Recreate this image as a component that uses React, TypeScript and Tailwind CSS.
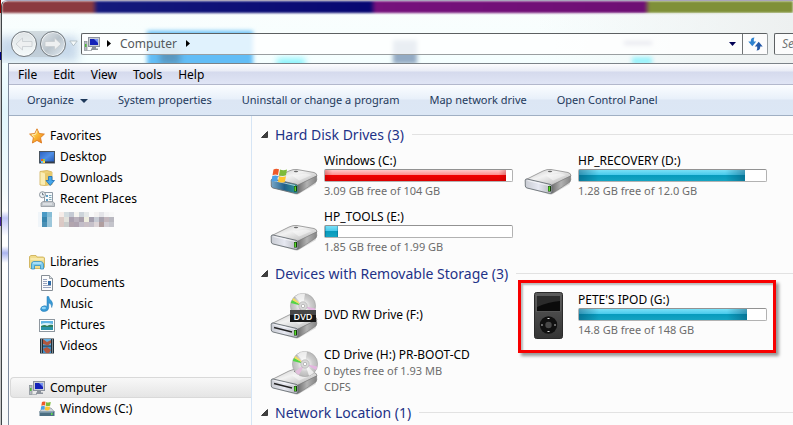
import type { ReactNode } from 'react';

type NavItem = { label: string; icon: ReactNode };

function StarIcon() {
  return (
    <svg width="16" height="16" viewBox="0 0 16 16" aria-hidden="true">
      <defs>
        <linearGradient id="star" x1="0" y1="0" x2="1" y2="1">
          <stop offset="0" stopColor="#fff3a0" />
          <stop offset="0.5" stopColor="#fbb832" />
          <stop offset="1" stopColor="#e8701a" />
        </linearGradient>
      </defs>
      <path
        d="M8 .8l2.200 4.700 5.200.6-3.900 3.600 1.100 5.300L8 12.400 3.400 15l1-5.300L.6 6.100l5.200-.6z"
        fill="url(#star)"
        stroke="#dd7b21"
        strokeLinejoin="round"
        strokeWidth="0.9"
      />
      <path d="M8 2.600L6.600 6.300l-3.600.6 2.700 2.400" fill="none" stroke="#fff6c4" strokeWidth="0.8" />
    </svg>
  );
}

function DesktopIcon() {
  return (
    <svg width="16" height="16" viewBox="0 0 16 16" aria-hidden="true">
      <defs>
        <linearGradient id="desk" x1="0" y1="0" x2="1" y2="1">
          <stop offset="0" stopColor="#2a5fc0" />
          <stop offset="0.5" stopColor="#4f8fe6" />
          <stop offset="1" stopColor="#1d4fae" />
        </linearGradient>
      </defs>
      <rect x="0.5" y="2.5" width="15" height="11.5" fill="url(#desk)" stroke="#4a5560" />
      <path d="M1 12.500h14v1.500H1z" fill="#343c47" />
      <path d="M2 10h2v2H2z" fill="#ee5a2a" />
      <path d="M4 10h2v2H4z" fill="#8fd14a" />
      <path d="M2 12h2v2H2z" fill="#5fc3f5" />
      <path d="M4 12h2v2H4z" fill="#ffd24a" />
    </svg>
  );
}

function DownloadsIcon() {
  return (
    <svg width="16" height="16" viewBox="0 0 16 16" aria-hidden="true">
      <path d="M1 1.500L8 .5l5 1.500v12.500L6 15.500l-5-.5z" fill="#edd27a" stroke="#cfae55" strokeWidth="0.8" />
      <path d="M1.500 2L6 3.500v11.500l-4.500-.5z" fill="#faedb4" />
      <path d="M6 3.500l7-1.500v12l-7 1.500z" fill="#e6c96c" />
      <path d="M9.500 6.500h3.500v4h2.500L11.200 15.500 7 10.500h2.500z" fill="#45a6ea" stroke="#1b6cb5" strokeWidth="0.8" />
    </svg>
  );
}

function RecentIcon() {
  return (
    <svg width="16" height="16" viewBox="0 0 16 16" aria-hidden="true">
      <path d="M5.500 1.500h8v10h-8z" fill="#f7fafc" stroke="#8f9aa5" />
      <path d="M7 4h2v2H7zM7 8h2v2H7z" fill="#5f9fc4" />
      <path d="M10 4.500h2.500M10 6.500h2.500M10 8.500h2.500" stroke="#7ea8b8" />
      <path d="M2 12l2-1.500h9.500L15.500 12v3.500H2z" fill="#c3c8cd" stroke="#858c94" strokeWidth="0.7" />
      <path d="M4 13h9" stroke="#f2f4f6" />
      <circle cx="3.5" cy="3.7" r="3" fill="#eef3f6" stroke="#8b949c" />
      <path d="M3.500 1.800v2h1.700" fill="none" stroke="#53616d" strokeWidth="0.8" />
    </svg>
  );
}

function LibrariesIcon() {
  return (
    <svg width="16" height="16" viewBox="0 0 16 16" aria-hidden="true">
      <path d="M.5 2.500L2 1.500h5l1 1.500h6.500l1 1v9l-1 1.500H1.500l-1-1z" fill="#f1dc8b" stroke="#c9ab4c" strokeWidth="0.8" />
      <path d="M1.500 5h13" stroke="#fff7cc" />
      <path d="M2.500 15V9.500Q3 7.500 5 7.500h6.500Q14 7.500 14.500 10v5h-3v-3.500h-6V15z" fill="#7ccbee" stroke="#348fc1" strokeWidth="0.8" />
      <path d="M4 9h8.500" stroke="#d6f2fd" />
    </svg>
  );
}

function DocumentsIcon() {
  return (
    <svg width="16" height="16" viewBox="0 0 16 16" aria-hidden="true">
      <path d="M2.500.5h8l3 3v12h-11z" fill="#fbfcfd" stroke="#868e96" />
      <path d="M10.500.5v3h3" fill="#dde3e8" stroke="#868e96" strokeWidth="0.8" />
      <path d="M4 4.500h4M4 6.500h4M4 8.500h4M4 10.500h8M4 12.500h8" stroke="#98a4be" />
      <path d="M9 6h3v4H9z" fill="#2c6aa7" />
    </svg>
  );
}

function MusicIcon() {
  return (
    <svg width="16" height="16" viewBox="0 0 16 16" aria-hidden="true">
      <path
        d="M8 .5h1.700q.3 2.600 2.800 4.500 2 2.300.2 6.500.2-3.800-3-4.700V12q-.5 3.300-4.400 3.600-3.400-.2-3.800-2.400.4-3 3.800-3.400 1.600-.1 2.700.6z"
        fill="#379ad6"
        stroke="#1f77b3"
        strokeWidth="0.5"
      />
      <ellipse cx="4.8" cy="12" rx="2.200" ry="1.200" fill="#8ed3f6" />
    </svg>
  );
}

function PicturesIcon() {
  return (
    <svg width="16" height="16" viewBox="0 0 16 16" aria-hidden="true">
      <rect x="0.5" y="2.5" width="15" height="12" fill="#fff" stroke="#8e979f" />
      <path d="M2 4h12v9H2z" fill="#5fb4e4" />
      <path d="M2 7q4-2 12 0v2H2z" fill="#d8f2f9" />
      <path d="M2 9q4-2 6 0 3-2 6-1v2H2z" fill="#2f7d5c" />
      <path d="M2 10h12v3H2z" fill="#2a93a6" />
    </svg>
  );
}

function VideosIcon() {
  return (
    <svg width="16" height="16" viewBox="0 0 16 16" aria-hidden="true">
      <path d="M1 .5h14v15H1z" fill="#22303a" />
      <path d="M4 1h8v6.500H4z" fill="#62b0e6" />
      <path d="M4 8.500h8V15H4z" fill="#3f8fcb" />
      <path d="M4 1l4 3 4-2v3L9 7.500 4 6zM4 11l4-2 4 3-2 3H7z" fill="#b0573f" />
      <path d="M2.500 1.500v13M13.500 1.500v13" stroke="#e8eef2" strokeDasharray="1 1" />
    </svg>
  );
}

function ComputerIcon() {
  return (
    <svg width="16" height="16" viewBox="0 0 16 16" aria-hidden="true">
      <rect x="4.5" y="1.5" width="11" height="9" fill="#c9ced6" stroke="#8d939e" />
      <path d="M6 3h8v6H6z" fill="#1522b8" />
      <path d="M10 3h4v4z" fill="#7692ef" />
      <path d="M8 11h4v1.500h2V14H7v-1.500h1z" fill="#8c929b" />
      <rect x="0.5" y="5.5" width="2.5" height="9" fill="#b5bbc1" stroke="#868d93" strokeWidth="0.7" />
      <path d="M1 8h1.500v3H1z" fill="#4dbb38" />
      <path d="M3 14.500h5" stroke="#b1b5ba" />
    </svg>
  );
}

function WindowsFlag() {
  return (
    <>
      <path d="M1.500 1.500Q4 0 7 1.200L6 7Q3.500 6 .5 7.200z" fill="#ee5a2a" />
      <path d="M8 1.500Q11 3 15 1.600L14 7.300Q10.500 8.600 7 7.200z" fill="#7dbb3a" />
      <path d="M.3 8Q3.500 7 6 8L5 13.500Q2.500 12.400-.5 13.600z" fill="#4aa0e6" />
      <path d="M7 8.200Q10 9.600 14 8.300L12.800 14Q9 15.200 6 13.800z" fill="#ffc52f" />
    </>
  );
}

function SmallDriveIcon() {
  return (
    <svg width="16" height="16" viewBox="0 0 16 16" aria-hidden="true">
      <path d="M.5 11l3-4H12l3.500 4z" fill="#cfd4d9" stroke="#8b959e" strokeWidth="0.7" />
      <path d="M.5 10.500h15v4.500H.5z" fill="#4c6f83" />
      <path d="M1 11h13" stroke="#a1bac8" />
      <path d="M12 12h1.500v2H12z" fill="#5be04d" />
      <g transform="translate(2 0) scale(.65)">
        <WindowsFlag />
      </g>
    </svg>
  );
}

// Mosaic that hides one of the favourites
const mosaic = [
  ['#f6ece8', '#d3dcdf', '#c5cad4', '#f5f3ef', '#cdd4da', '#e5e8e8', '#fafafa', '#f3f1f1', '#e4e4e8', '#f4f4f5', '#f8f8f8'],
  ['#dccbc6', '#e2e2dc', '#a9a0af', '#bab2bd', '#a9a0ac', '#efeedf', '#a5a0af', '#c7cbd4', '#a7a2ae', '#c3b7bd', '#b9b8c0'],
  ['#dbc9c5', '#c9cccb', '#b2a5ae', '#aea3b0', '#c2bdc8', '#cac0c6', '#c5c0c9', '#ddd5d8', '#b09e9f', '#d0ccd3', '#c4c4cb'],
];

function DriveBody({ slot, system, dy }: { slot?: boolean; system?: boolean; dy: number }) {
  return (
    <g transform={`translate(0 ${dy})`}>
      <path d="M3 36l24 7 19-11-2-5z" fill="#000" opacity="0.13" />
      <path d="M2 27.500L19 19q4-2 8-1.500l17 3q3 .8 3 3.500L28 33.500z" fill="url(#lid)" stroke="#8b8b8b" strokeWidth="0.8" />
      <path d="M27 33.500L46.500 24q.8 4-.5 6L29 41l-2 .5z" fill="url(#side)" stroke="#777" strokeWidth="0.6" />
      <path
        d="M1.200 28q.3-1.200 2-1l22.800 5.300q1.800.5 1.800 2v5.500q0 2-2 1.700L3 36q-1.500-.4-1.700-2z"
        fill={system ? 'url(#sysface)' : 'url(#face)'}
        stroke="#6a7075"
        strokeWidth="0.9"
      />
      <path d="M3.500 28.500l21.500 5" stroke="#fff" strokeWidth="0.8" opacity="0.8" />
      {slot && <path d="M4 31.500l18 4.500" stroke="#222" strokeWidth="1.300" />}
      <rect x="24" y="34" width="3" height="5.5" fill="#173d0d" />
      <rect x="24.5" y="34.5" width="1.500" height="4.500" fill="#55d829" />
      <path d="M22 23.500l14-2 6 1.500-13 5.500z" fill="#fff" opacity="0.45" />
      <ellipse cx="26" cy="19.5" rx="2.200" ry="0.800" fill="#686868" />
    </g>
  );
}

function DriveDefs() {
  return (
    <svg width="0" height="0" className="absolute" aria-hidden="true">
      <defs>
        <linearGradient id="lid" x1="0" y1="0" x2="1" y2="1">
          <stop offset="0" stopColor="#c4c4c4" />
          <stop offset="0.4" stopColor="#f2f2f2" />
          <stop offset="0.7" stopColor="#d0d0d0" />
          <stop offset="1" stopColor="#a0a0a0" />
        </linearGradient>
        <linearGradient id="side" x1="0" y1="0" x2="1" y2="0">
          <stop offset="0" stopColor="#6a6a6a" />
          <stop offset="0.5" stopColor="#b2b2b2" />
          <stop offset="1" stopColor="#848484" />
        </linearGradient>
        <linearGradient id="face" x1="0" y1="0" x2="1" y2="0">
          <stop offset="0" stopColor="#c9ccd3" />
          <stop offset="0.5" stopColor="#e6e8f1" />
          <stop offset="1" stopColor="#b4b6bd" />
        </linearGradient>
        <linearGradient id="sysface" x1="0" y1="0" x2="1" y2="0">
          <stop offset="0" stopColor="#79a8c8" />
          <stop offset="0.5" stopColor="#22608a" />
          <stop offset="1" stopColor="#2f9a97" />
        </linearGradient>
        <radialGradient id="disc">
          <stop offset="0.2" stopColor="#fafafa" />
          <stop offset="0.6" stopColor="#cfcfcf" />
          <stop offset="1" stopColor="#b9b9b9" />
        </radialGradient>
        <linearGradient id="pod" x1="0" y1="0" x2="0" y2="1">
          <stop offset="0" stopColor="#5c5c5c" />
          <stop offset="0.5" stopColor="#484848" />
          <stop offset="1" stopColor="#343434" />
        </linearGradient>
      </defs>
    </svg>
  );
}

function HardDrive({ system }: { system?: boolean }) {
  return (
    <svg width="48" height="48" viewBox="0 0 48 48" className="shrink-0" aria-hidden="true">
      <DriveBody dy={0} system={system} />
      {system && (
        <g transform="translate(2 16)">
          <WindowsFlag />
        </g>
      )}
    </svg>
  );
}

function OpticalDrive({ dvd }: { dvd?: boolean }) {
  const cx = dvd ? 33 : 35;
  const cy = dvd ? 15 : 17;
  return (
    <svg width="48" height="48" viewBox="0 0 48 48" className="shrink-0" aria-hidden="true">
      <DriveBody dy={5} slot />
      <g transform={`translate(${cx} ${cy})`}>
        <circle r="12.6" fill="url(#disc)" stroke="#a3a3a3" strokeWidth="0.6" />
        <path d="M0 0L-8-9.500A12.500 12.500 0 0 1 2-12.300z" fill="#fff" opacity="0.7" />
        <path d="M0 0L-12.300-3A12.500 12.500 0 0 1-10.800-6z" fill="#54d548" />
        <path d="M0 0L-10.800-6A12.500 12.500 0 0 1-9.500-8z" fill="#f2df5c" />
        <path d="M0 0L12.300 2.500A12.500 12.500 0 0 1 11 6z" fill="#e4b6e0" />
        <path d="M0 0L-6 11A12.500 12.500 0 0 1-10 7.500z" fill="#e2bfdc" />
        <path d="M0 0L9 8.500A12.500 12.500 0 0 1 4 11.800z" fill="#fff" opacity="0.7" />
        <circle r="4.2" fill="#d9d9d9" stroke="#aaa" strokeWidth="0.6" />
        <circle r="1.7" fill="#fff" stroke="#999" strokeWidth="0.6" />
      </g>
      {dvd && (
        <>
          <rect x="20" y="19" width="26" height="12" fill="#171717" />
          <rect x="20" y="19" width="26" height="5" fill="#474747" />
          <text x="33" y="28.500" textAnchor="middle" fontSize="9" fontWeight="600" fill="#fff" fontFamily="Open Sans, sans-serif">
            DVD
          </text>
        </>
      )}
    </svg>
  );
}

function IPod() {
  return (
    <svg width="48" height="48" viewBox="0 0 48 48" className="shrink-0" aria-hidden="true">
      <rect x="10.5" y="1.5" width="28" height="46" rx="2" fill="url(#pod)" stroke="#2b2b2b" />
      <rect x="12.5" y="4.5" width="24" height="16" fill="#0b0b0b" stroke="#6b6b6b" strokeWidth="0.7" />
      <path d="M13 5h23v5q-12 1-23 6z" fill="#2b2b2b" />
      <circle cx="24.5" cy="34" r="8.7" fill="#101010" />
      <circle cx="24.5" cy="34" r="3.2" fill="#484848" />
      <path d="M23.500 27.500h2M23.500 40.500h2" stroke="#ddd" />
      <path d="M17.500 33v2l1.700-1zM31.500 33v2l-1.700-1z" fill="#ddd" />
    </svg>
  );
}

const favorites: NavItem[] = [
  { label: 'Desktop', icon: <DesktopIcon /> },
  { label: 'Downloads', icon: <DownloadsIcon /> },
  { label: 'Recent Places', icon: <RecentIcon /> },
];

const libraries: NavItem[] = [
  { label: 'Documents', icon: <DocumentsIcon /> },
  { label: 'Music', icon: <MusicIcon /> },
  { label: 'Pictures', icon: <PicturesIcon /> },
  { label: 'Videos', icon: <VideosIcon /> },
];

const menus = ['File', 'Edit', 'View', 'Tools', 'Help'];
const commands = ['System properties', 'Uninstall or change a program', 'Map network drive', 'Open Control Panel'];

function NavRow({ label, icon, child, selected }: NavItem & { child?: boolean; selected?: boolean }) {
  return (
    <a
      href="#"
      className={`flex h-[21px] items-center gap-[5px] rounded-l-sm border border-r-0 ${child ? 'pl-7' : 'pl-[18px]'} ${
        selected ? 'border-[#d9d9d9] bg-linear-to-b from-[#f8f8f8] to-[#e5e5e5]' : 'border-transparent'
      }`}
    >
      {icon}
      <span>{label}</span>
    </a>
  );
}

function Group({ title, children }: { title: string; children?: ReactNode }) {
  return (
    <section>
      <h2 className="flex h-[27px] items-center text-[14px] text-[#1e3287]">
        <svg width="7" height="7" viewBox="0 0 7 7" className="mr-[7px] shrink-0" aria-hidden="true">
          <path d="M6.500.5v6h-6z" fill="#404040" stroke="#222" strokeWidth="0.8" />
        </svg>
        <span className="whitespace-nowrap">{title}</span>
        <span className="ml-2 h-px flex-1 bg-[#e2e2e2]" />
      </h2>
      <div className="grid grid-cols-[repeat(auto-fill,254px)] pl-[9px]">{children}</div>
    </section>
  );
}

function Usage({ label, percent, full }: { label: string; percent: number; full?: boolean }) {
  return (
    <div
      role="progressbar"
      aria-label={label}
      aria-valuenow={percent}
      className="mb-px h-[13px] w-[189px] rounded-xs border border-[#b2b2b2] border-t-[#929292] bg-white"
    >
      <div
        className={`h-full ${
          full
            ? 'bg-[linear-gradient(90deg,#a0000044,transparent_4%,transparent_96%,#a0000044),linear-gradient(#ffcaca,#ff8f8f_42%,#f00000_50%,#dc0000)]'
            : 'bg-[linear-gradient(90deg,#00385a66,transparent_12%,transparent_88%,#00385a66),linear-gradient(#79e0f7,#4bcbec_42%,#079bbd_50%,#15a4c2)]'
        }`}
        style={{ width: `${percent}%` }}
      />
    </div>
  );
}

type TileProps = {
  icon: ReactNode;
  name: string;
  details?: string[];
  percent?: number;
  full?: boolean;
  marked?: boolean;
};

function Tile({ icon, name, details = [], percent, full, marked }: TileProps) {
  return (
    <div className="relative flex h-14 items-center gap-1.5">
      {icon}
      <div className="whitespace-nowrap leading-4">
        <div>{name}</div>
        {percent !== undefined && <Usage label={name} percent={percent} full={full} />}
        {details.map((line) => (
          <div key={line} className="text-[11px] leading-4 text-[#6d6d6d]">
            {line}
          </div>
        ))}
      </div>
      {marked && (
        <div className="pointer-events-none absolute -top-[7px] -left-1.5 h-[73px] w-[258px] border-3 border-[#f80000] shadow-[3px_3px_3px_#00000066,inset_2px_2px_2px_#00000044]" />
      )}
    </div>
  );
}

function TravelButton({ back }: { back?: boolean }) {
  return (
    <button
      aria-label={back ? 'Back' : 'Forward'}
      className={`flex size-[26px] items-center justify-center rounded-full border border-[#747b80] shadow-[inset_0_0_0_1px_#ffffffaa] ${
        back ? 'bg-linear-to-b from-[#dfe4e6] to-[#f5fafb]' : 'bg-linear-to-br from-[#e4e9ec] via-[#b9c3cb] to-[#e3edf5]'
      }`}
    >
      <svg width="18" height="14" viewBox="0 0 18 14" className={back ? '' : 'rotate-180'} aria-hidden="true">
        <path d="M1 7l6.500-6v3.500H17v5H7.500V13z" fill="#eef0f1" stroke="#c6cbcf" strokeWidth="0.8" />
      </svg>
    </button>
  );
}

export default function App() {
  return (
    <div
      className="flex h-screen overflow-hidden bg-[#fcfcfc] text-[12px] text-black"
      style={{ fontFamily: '"Segoe UI", "Noto Sans", sans-serif' }}
    >
      <DriveDefs />
      <div className="w-px shrink-0 bg-[linear-gradient(#8b0000_13px,#c4c4c4_13px,#c4c4c4_52px,#000080_52px,#000080_60px,#c4c4c4_60px,#c4c4c4_217px,#4520a0_217px,#4520a0_226px,#c4c4c4_226px)]" />

      <div className="relative flex min-w-0 flex-1 flex-col rounded-tl-md border-t border-l border-t-[#a9a5bb] border-l-[#3f4447] bg-[linear-gradient(#fafdfd,#f5ffff_60px,#e2f6fc_110px,#f4fbfd_190px,#fff_210px,#bfc5f5_217px,#fff_235px,#fff_245px,#aab4f0_252px,#fff_262px,#f7f9fa)] pl-1.5">
        {/* Shapes that show through the glass frame */}
        <div className="absolute inset-x-0 top-0 h-[62px] overflow-hidden rounded-tl-md" aria-hidden="true">
          <div className="h-3 w-full bg-[linear-gradient(90deg,#8b3a40_90px,#151a7c_96px,#070772_368px,#76127c_374px,#6e0f74_642px,#7f9038_648px)] blur-[1px]" />
          <div className="absolute top-3 right-0 h-[50px] w-64 bg-linear-to-r from-transparent to-[#edf0f0]" />
          <div className="absolute top-[30px] left-[145px] h-9 w-[106px] bg-[#62bdf6] blur-[2px]" />
          <div className="absolute top-[45px] left-[158px] h-[18px] w-5 bg-[#557f9c] opacity-60 blur-[3px]" />
          <div className="absolute top-[57px] left-[275px] h-3 w-7 bg-[#8ff4fc] blur-[3px]" />
          <div className="absolute top-[39px] left-[391px] h-6 w-6 bg-[#93abc4] blur-[2px]" />
          <div className="absolute top-[56px] left-[630px] h-2 w-5 bg-[#9af2fb] blur-[2px]" />
          <div className="absolute top-[40px] left-[622px] h-1 w-7 bg-[#8f95b5] blur-[2px]" />
          <div className="absolute top-[36px] -left-1 h-6 w-20 bg-[#a9c0dd] opacity-60 blur-[5px]" />
        </div>

        <header className="relative flex h-[62px] shrink-0 items-center pt-[27px] pb-1">
          <div className="ml-[3px] flex items-center gap-[3px] rounded-full bg-[#b8c2c788]">
            <TravelButton back />
            <TravelButton />
          </div>
          <button aria-label="Recent pages" className="mx-[3px] flex h-5 w-[9px] items-center">
            <svg width="9" height="7" viewBox="0 0 9 7" aria-hidden="true">
              <path d="M.8 1h7.400L4.500 5.800z" fill="#f5fafb" stroke="#a9b6bd" strokeWidth="0.8" />
            </svg>
          </button>

          <div className="flex h-[22px] min-w-0 flex-1 items-center rounded-xs border border-[#9a9fa1] border-t-[#5c6062] border-l-[#5c6062] bg-white/80 text-[#54595c]">
            <span className="ml-[2px]">
              <ComputerIcon />
            </span>
            <svg width="4" height="7" viewBox="0 0 4 7" className="ml-[7px]" aria-hidden="true">
              <path d="M0 0l4 3.500L0 7z" fill="#000" />
            </svg>
            <button className="ml-[9px]">Computer</button>
            <svg width="4" height="7" viewBox="0 0 4 7" className="ml-[9px]" aria-hidden="true">
              <path d="M0 0l4 3.500L0 7z" fill="#000" />
            </svg>
            <button aria-label="Previous locations" className="ml-auto flex h-full w-5 items-center justify-center">
              <svg width="7" height="4" viewBox="0 0 7 4" aria-hidden="true">
                <path d="M0 0h7L3.500 4z" fill="#000055" />
              </svg>
            </button>
            <button aria-label="Refresh" className="flex h-full w-[25px] items-center justify-center border-l border-[#6f7375]">
              <svg width="15" height="14" viewBox="0 0 15 14" aria-hidden="true">
                <path d="M6.500.5Q2.500.5 2.800 4.500H.3L4.300 9.300 8.200 4.500H5.800Q5.500 2 6.500.5z" fill="#2f83cf" />
                <path d="M8.500 13.500q4 0 3.700-4h2.500L10.700 4.700 6.800 9.500h2.400q.3 2.500-.7 4z" fill="#2459a8" />
              </svg>
            </button>
          </div>

          <div className="ml-1.5 h-[22px] w-[19px] shrink-0 overflow-hidden rounded-l-xs border border-r-0 border-[#9a9fa1] border-t-[#5c6062] border-l-[#5c6062] bg-white/80">
            <input
              type="search"
              aria-label="Search Computer"
              placeholder="Search Computer"
              className="block h-5 w-40 bg-transparent pl-[7px] italic outline-none placeholder:text-[#6f7476]"
            />
          </div>
        </header>

        <div className="relative flex min-h-0 flex-1 flex-col border-t border-l border-t-[#7b8288] border-l-[#7f8b9d] bg-[#fcfcfc]">
          <nav className="flex h-[21px] shrink-0 items-center gap-4 border-b border-[#b3b8cc] bg-[linear-gradient(#fdfdfe,#e9ecf6_7px,#d5daed_8px,#e0e5f5)] pt-0.5 pl-[9px]">
            {menus.map((menu) => (
              <button key={menu}>{menu}</button>
            ))}
          </nav>

          <div className="flex h-[31px] shrink-0 items-center gap-[30px] border-b border-[#a0afc3] bg-[linear-gradient(#fbfdff,#e8f0fa_14px,#dce6f4_15px,#dce7f5)] pt-px pl-[18px] text-[11px] whitespace-nowrap text-[#1e395b]">
            <button className="flex items-center gap-1.5">
              Organize
              <svg width="8" height="4" viewBox="0 0 8 4" aria-hidden="true">
                <path d="M0 0h8L4 4z" fill="#1e395b" />
              </svg>
            </button>
            {commands.map((command) => (
              <button key={command}>{command}</button>
            ))}
          </div>

          <div className="flex min-h-0 flex-1">
            <aside className="w-[243px] shrink-0 overflow-hidden border-r border-[#d6e5f5] pt-[9px] pl-px">
              <NavRow label="Favorites" icon={<StarIcon />} />
              {favorites.map((item) => (
                <NavRow key={item.label} {...item} child />
              ))}
              <div className="flex h-[21px] items-center gap-[5px] pl-7" aria-hidden="true">
                <div className="flex h-[15px] w-4">
                  <span className="w-1 bg-[#f0f5f9]" />
                  <span className="w-[5px] bg-[linear-gradient(#4a9ac5_5px,#3785ad_5px,#3785ad_10px,#4a90b5_10px)]" />
                  <span className="w-[5px] bg-[linear-gradient(#86bdd6_5px,#9dc7db_5px)]" />
                </div>
                <div>
                  {mosaic.map((row, y) => (
                    <div key={y} className="flex">
                      {row.map((color, x) => (
                        <span key={x} className="size-[5px]" style={{ background: color }} />
                      ))}
                    </div>
                  ))}
                </div>
              </div>

              <div className="mt-[21px]">
                <NavRow label="Libraries" icon={<LibrariesIcon />} />
                {libraries.map((item) => (
                  <NavRow key={item.label} {...item} child />
                ))}
              </div>

              <div className="mt-[21px]">
                <NavRow label="Computer" icon={<ComputerIcon />} selected />
                <NavRow label="Windows (C:)" icon={<SmallDriveIcon />} child />
              </div>
            </aside>

            <main className="min-w-0 flex-1 overflow-hidden pt-[5px] pl-[9px]">
              <Group title="Hard Disk Drives (3)">
                <Tile icon={<HardDrive system />} name="Windows (C:)" percent={97} full details={['3.09 GB free of 104 GB']} />
                <Tile icon={<HardDrive />} name="HP_RECOVERY (D:)" percent={89} details={['1.28 GB free of 12.0 GB']} />
                <Tile icon={<HardDrive />} name="HP_TOOLS (E:)" percent={7} details={['1.85 GB free of 1.99 GB']} />
              </Group>
              <Group title="Devices with Removable Storage (3)">
                <Tile icon={<OpticalDrive dvd />} name="DVD RW Drive (F:)" />
                <Tile icon={<IPod />} name="PETE'S IPOD (G:)" percent={90} details={['14.8 GB free of 148 GB']} marked />
                <Tile icon={<OpticalDrive />} name="CD Drive (H:) PR-BOOT-CD" details={['0 bytes free of 1.93 MB', 'CDFS']} />
              </Group>
              <Group title="Network Location (1)" />
            </main>
          </div>
        </div>
      </div>
    </div>
  );
}
